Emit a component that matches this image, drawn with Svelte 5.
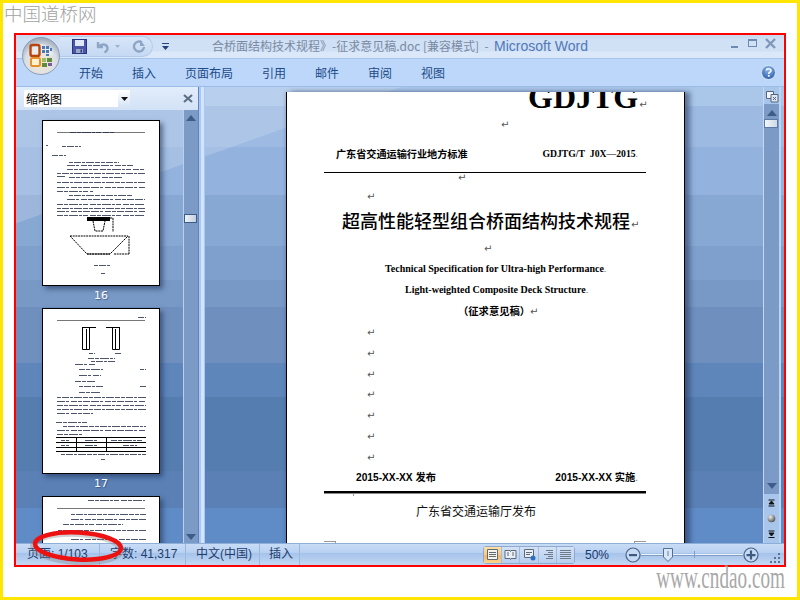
<script>
  const pat = ['6 1 4 1 9 1 3 1 5 2', '4 1 7 1 3 1 8 1 5 1', '8 1 3 2 6 1 4 1 7 1'];
  // [x1, x2, y] in thumbnail coordinates
  const t1 = [[27,71,11],[19,38,25],[3,5,24],[9,23,34],[26,76,41],[24,90,44],[24,102,48],[14,102,52],[14,22,55],[26,79,56],[14,102,61],[14,102,66],[14,50,70],[26,90,74],[24,102,78],[14,102,83],[14,102,87],[14,102,90],[14,102,94],[51,67,144],[58,62,152]];
  const t2 = [[95,103,8],[46,52,44],[72,78,44],[45,72,49],[48,72,52],[32,52,55],[36,60,60],[97,103,60],[36,58,66],[32,52,72],[36,60,77],[97,103,77],[36,58,83],[14,103,88],[14,103,92],[14,103,96],[14,103,100],[14,50,104],[13,45,113],[20,103,117],[14,103,121],[14,40,125],[18,26,131],[42,54,131],[68,100,131],[18,26,136],[42,54,136],[80,94,136],[18,103,145],[58,62,150]];
  const t3 = [[45,102,3],[28,103,17],[28,103,22],[20,80,27],[15,103,33],[28,103,42],[30,80,46]];
  const rets = [0,1,2,3,4,5,6];
  const views = [0,1,2,3,4];
</script>

{#snippet lines(list)}
  {#each list as l, i}
    <line x1={l[0]} x2={l[1]} y1={l[2] + 0.5} y2={l[2] + 0.5} stroke="#1f2a44" stroke-opacity=".8" stroke-width="1" stroke-dasharray={pat[i % 3]} />
  {/each}
{/snippet}

<div class="screen">
  <div class="wm-top">中国道桥网</div>

  <div class="window">
    <div class="title">
      <div class="qat">
        <svg class="save" width="15" height="15" viewBox="0 0 15 15"><rect x=".5" y=".5" width="14" height="14" fill="#4a55a8" stroke="#2b3480"/><rect x="3" y="1" width="9" height="6" fill="#dfe6f5"/><rect x="4" y="10" width="7" height="4" fill="#9aa6c8"/><rect x="8.5" y="10.5" width="1.5" height="3" fill="#2b3480"/></svg>
        <svg class="undo" width="15" height="14" viewBox="0 0 15 14"><path d="M3 2v5h5M3.5 7C6 3.5 12 3.500 12.500 8c.2 2-1 3.500-3 4.500" fill="none" stroke="#8ea6c6" stroke-width="2.400"/></svg>
        <svg class="mini" width="5" height="3" viewBox="0 0 5 3"><path d="M0 0h5L2.500 3z" fill="#9db2cf"/></svg>
        <svg class="redo" width="14" height="14" viewBox="0 0 14 14"><path d="M10 2.500A5 5 0 1 0 12 7" fill="none" stroke="#8ea6c6" stroke-width="2.400"/><path d="M8 0v6h5z" fill="#8ea6c6"/></svg>
      </div>
      <svg class="custom" width="7" height="8" viewBox="0 0 7 8"><rect y="0" width="7" height="1" fill="#23427c"/><path d="M0 3h7L3.500 7z" fill="#23427c"/></svg>
      <div class="doc-title">合桥面结构技术规程》-征求意见稿.doc [兼容模式] &nbsp;-&nbsp; <span>Microsoft Word</span></div>
      <div class="winbtns">
        <svg width="50" height="14" viewBox="0 0 50 14"><rect x="1" y="9" width="7" height="2" fill="#6f8ab0"/><rect x="18.500" y="2.500" width="8" height="7" fill="none" stroke="#6f8ab0"/><rect x="18" y="2" width="9" height="2" fill="#6f8ab0"/><path d="M36 2l9 9M45 2l-9 9" stroke="#7f97b8" stroke-width="2.400"/></svg>
      </div>
    </div>

    <div class="tabs">
      <span class="t1">开始</span><span class="t2">插入</span><span class="t3">页面布局</span><span class="t4">引用</span><span class="t5">邮件</span><span class="t6">审阅</span><span class="t7">视图</span>
      <svg class="help" width="15" height="15" viewBox="0 0 15 15"><defs><radialGradient id="hb" cx=".5" cy=".3" r=".8"><stop offset="0" stop-color="#8fb8ec"/><stop offset="1" stop-color="#1d4f9f"/></radialGradient></defs><circle cx="7.500" cy="7.500" r="7" fill="url(#hb)" stroke="#dce9fa"/><path d="M5.200 5.500c.3-2.200 4.800-2.200 4.800.2 0 1.600-2.300 1.500-2.300 3.300" fill="none" stroke="#fff" stroke-width="1.500"/><rect x="6.900" y="10" width="1.700" height="1.700" fill="#fff"/></svg>
    </div>

    <div class="main">
      <aside class="thumbs">
        <div class="thumb-head">
          <div class="combo">
            <span>缩略图</span>
            <div class="combo-btn"><svg width="7" height="4" viewBox="0 0 7 4"><path d="M0 0h7L3.500 4z" fill="#111"/></svg></div>
          </div>
          <svg class="x" width="10" height="9" viewBox="0 0 10 9"><path d="M1 1l8 7M9 1l-8 7" stroke="#5e6f86" stroke-width="2.200"/></svg>
        </div>
        <div class="thumb-body">
          <div class="list">
            <div class="thumb">
              <svg width="116" height="164" viewBox="0 0 116 164">
                <rect x="14" y="11" width="88" height="1" fill="#777"/>
                <g>{@render lines(t1)}</g>
                <rect x="44" y="96" width="23" height="4" fill="#000"/>
                <path d="M50 100l2 10h8l2-10M70 97v14M67 97h3M27 115h58M27 115l17 18h23l18-18M44 133h23M71 133h15M86 115v18" fill="none" stroke="#000" stroke-dasharray="2 .7"/>
              </svg>
            </div>
            <div class="num">16</div>
            <div class="thumb">
              <svg width="116" height="164" viewBox="0 0 116 164">
                <rect x="14" y="11" width="88" height="1" fill="#777"/>
                <g>{@render lines(t2)}</g>
                <path d="M39.500 18.500v22h7v-22M43.500 20v20M39 18.500h14M76.500 18.500v22h-7v-22M72.500 20v20M63 18.500h14" fill="none" stroke="#000"/>
                <path d="M13 128.500h90M13 133.500h90M13 138.500h90M13 142.500h90M33.500 128v15M63.500 128v15" stroke="#000"/>
              </svg>
            </div>
            <div class="num">17</div>
            <div class="thumb last">
              <svg width="116" height="164" viewBox="0 0 116 164">
                <rect x="14" y="11" width="88" height="1" fill="#777"/>
                <g>{@render lines(t3)}</g>
              </svg>
            </div>
          </div>
          <div class="lscroll">
            <svg width="10" height="6" viewBox="0 0 10 6"><path d="M0 6h10L5 0z" fill="#3f5b88"/></svg>
            <div class="lthumb"></div>
            <svg class="down" width="10" height="6" viewBox="0 0 10 6"><path d="M0 0h10L5 6z" fill="#3f5b88"/></svg>
          </div>
        </div>
      </aside>
      <div class="splitter"></div>

      <div class="docarea">
        <div class="page">
          <div class="gd">GDJTG<span class="ret">↵</span></div>
          <div class="row rb"><span class="ret">↵</span></div>
          <div class="row rc"><b class="cjk">广东省交通运输行业地方标准</b><b class="code">GDJTG/T&nbsp; J0X—2015<i>.</i></b></div>
          <div class="rule"></div>
          <div class="rd"><span class="ret">↵</span></div>
          <div class="row re"><span class="ret">↵</span></div>
          <div class="ttl">超高性能轻型组合桥面结构技术规程<span class="ret">↵</span></div>
          <div class="row rg"><span class="ret">↵</span></div>
          <div class="row en rh">Technical Specification for Ultra-high Performance<i>.</i></div>
          <div class="row en ri">Light-weighted Composite Deck Structure<i>.</i></div>
          <div class="row rj"><b>（征求意见稿）</b><span class="ret">↵</span></div>
          <div class="rets">
            {#each rets as r}<div class="retline"><span class="ret">↵</span></div>{/each}
          </div>
          <div class="row dates"><b>2015-XX-XX 发布</b><b>2015-XX-XX 实施<i>.</i></b></div>
          <div class="thick"></div>
          <div class="mark"></div>
          <div class="row pub">广东省交通运输厅发布</div>
          <div class="crops"><span class="c1"></span><span class="c2"></span></div>
        </div>
      </div>

      <div class="rscroll">
        <svg class="ruler" width="14" height="13" viewBox="0 0 14 13"><path d="M1.500 1.500h7v7h-7z" fill="#f2f5fa" stroke="#55657c"/><path d="M6 4.500h7v7.500H6z" fill="#dfe7f2" stroke="#55657c"/><path d="M8 7l3 3M11 7l-3 3" stroke="#55657c"/></svg>
        <div class="rtrack">
          <svg class="up" width="10" height="6" viewBox="0 0 10 6"><path d="M0 6h10L5 0z" fill="#3f5b88"/></svg>
          <div class="rthumb"></div>
          <svg class="dn" width="10" height="6" viewBox="0 0 10 6"><path d="M0 0h10L5 6z" fill="#3f5b88"/></svg>
        </div>
        <div class="nav">
          <svg width="9" height="8" viewBox="0 0 9 8"><path d="M1.500 1h6M4.500 2L7 5H2zM1.500 7h6" fill="#111" stroke="#111"/></svg>
          <svg width="9" height="9" viewBox="0 0 9 9"><defs><radialGradient id="ng" cx=".35" cy=".3" r=".8"><stop offset="0" stop-color="#eee"/><stop offset="1" stop-color="#444"/></radialGradient></defs><circle cx="4.500" cy="4.500" r="3.800" fill="url(#ng)"/></svg>
          <svg width="9" height="8" viewBox="0 0 9 8"><path d="M1.500 1h6M2 3h5L4.500 6zM1.500 7.500h6" fill="#111" stroke="#111"/></svg>
        </div>
      </div>
      <div class="rborder"></div>
    </div>

    <div class="status">
      <span class="s s1">页面: 1/103</span>
      <span class="s s2">字数: 41,317</span>
      <span class="s s3">中文(中国)</span>
      <span class="s s4">插入</span>
      <div class="views">
        {#each views as v}
          <div class="view" class:on={v === 0}>
            <svg width="13" height="13" viewBox="0 0 13 13">
              {#if v === 0}
                <path d="M1.500 1.500h10v10h-10z" fill="#f6f3ea" stroke="#5f6a78"/><path d="M3 4.500h7M3 6.500h7M3 8.500h7" stroke="#5f6a78"/>
              {:else if v === 1}
                <path d="M1 2.500h5l.5 1 .5-1h5v8H7l-.5 1-.5-1H1z" fill="#e9eef6" stroke="#5f6a78"/><path d="M3 5h2M3 7h2M8 5h2M8 7h2" stroke="#5f6a78"/>
              {:else if v === 2}
                <path d="M1.500 1.500h9v8h-9z" fill="#e9eef6" stroke="#5f6a78"/><path d="M3 4.500h6M3 6.500h4" stroke="#5f6a78"/><circle cx="10" cy="10" r="2.500" fill="#2f6fc0"/>
              {:else if v === 3}
                <path d="M5 2.500h7M7 4.500h5M3 6.500h9M7 8.500h5M5 10.500h7" stroke="#6f7a88"/>
              {:else}
                <path d="M1 2.500h11M1 4.500h11M1 6.500h11M1 8.500h11M1 10.500h11" stroke="#6f7a88"/>
              {/if}
            </svg>
          </div>
        {/each}
      </div>
      <span class="zoomval">50%</span>
      <div class="zoomer">
        <svg width="16" height="16" viewBox="0 0 16 16"><circle cx="8" cy="8" r="7" fill="#c6daf4" stroke="#4a6387" stroke-width="1.200"/><rect x="4" y="7" width="8" height="2.200" fill="#3f5a80"/></svg>
        <div class="track">
          <span class="tick"></span>
          <svg class="knob" width="10" height="14" viewBox="0 0 10 14"><path d="M.5.500h9v8.500L5 13.500.5 9z" fill="#d9e7f8" stroke="#55708f"/><rect x="4.500" y="3" width="1" height="5" fill="#6a86a8"/></svg>
        </div>
        <svg width="16" height="16" viewBox="0 0 16 16"><circle cx="8" cy="8" r="7" fill="#c6daf4" stroke="#4a6387" stroke-width="1.200"/><path d="M3.500 7h9v2.200h-9zM6.900 3.500h2.200v9H6.900z" fill="#3f5a80"/></svg>
      </div>
      <svg class="grip" width="11" height="11" viewBox="0 0 11 11"><path d="M8 0h2v2H8zM4 4h2v2H4zM8 4h2v2H8zM0 8h2v2H0zM4 8h2v2H4zM8 8h2v2H8z" fill="#5a7394"/></svg>
    </div>

    <div class="orb">
      <svg width="38" height="38" viewBox="0 0 38 38">
        <defs>
          <radialGradient id="og" cx=".5" cy=".65" r=".7"><stop offset="0" stop-color="#fbe9cf"/><stop offset=".6" stop-color="#d9dfe6"/><stop offset="1" stop-color="#8c97a9"/></radialGradient>
        </defs>
        <circle cx="19" cy="19" r="18.500" fill="url(#og)" stroke="#8d9db6"/>
        <path d="M7 19a12 12 0 0 1 24 0c-6-4-18-4-24 0z" fill="#fff" opacity=".35"/>
        <rect x="8.500" y="8" width="9" height="11" rx="2" fill="none" stroke="#b8440f" stroke-width="2.400"/>
        <g fill="#4a79b8"><rect x="20" y="9" width="3" height="3"/><rect x="24" y="9" width="3" height="3"/><rect x="28" y="11" width="2" height="3"/><rect x="20" y="13" width="3" height="3"/><rect x="24" y="13" width="3" height="3"/><rect x="24" y="17" width="3" height="2"/></g>
        <rect x="9" y="21" width="9" height="8" rx="1.500" fill="#fff1d2" stroke="#e6912a" stroke-width="2"/>
        <rect x="20" y="21" width="4" height="4" fill="#9dbb62"/><rect x="25" y="21" width="5" height="4" fill="#5f8d3b"/><rect x="20" y="26" width="5" height="4" fill="#5f8d3b"/><rect x="26" y="26" width="4" height="3" fill="#7a5ba0"/>
      </svg>
    </div>
  </div>

  <div class="wm-bottom">www.cndao.com</div>

  <svg class="oval" width="110" height="50" viewBox="0 0 110 50">
    <ellipse cx="55" cy="27" rx="44" ry="14" fill="none" stroke="#7a7a7a" stroke-width="6" opacity=".35" transform="rotate(3 55 27)"/>
    <ellipse cx="56" cy="25" rx="43" ry="13.500" fill="none" stroke="#ee1111" stroke-width="4.500" transform="rotate(3 56 25)"/>
  </svg>
</div>

<style>
  :global(body) { margin: 0; }
  .screen {
    position: relative; box-sizing: border-box; width: 800px; height: 600px;
    border: 3px solid #ffe600; background: #fff; overflow: hidden;
    font-family: "Liberation Sans", "Noto Sans CJK SC", sans-serif;
  }
  .wm-top {
    height: 30px; line-height: 20px; padding-left: 1px; font-size: 18.500px; font-weight: 300;
    color: #a2a2a2; font-family: "Noto Sans CJK SC", sans-serif;
  }
  .wm-bottom {
    height: 26px; margin-top: -3px; width: 782px; text-align: right; font-family: "Liberation Serif", serif; font-size: 32px;
    line-height: 26px; color: #a8a8a8; transform: scaleX(.6); transform-origin: right; white-space: nowrap;
  }
  .window {
    position: relative; margin-left: 11px; box-sizing: border-box; width: 772px; height: 534px;
    border: 2px solid #f00; background: #bcd6f7; display: flex; flex-direction: column; overflow: hidden;
  }
  .title {
    height: 24px; flex: none; display: flex; align-items: flex-start; box-sizing: border-box;
    background: linear-gradient(#cbdcf1 0, #cbdcf1 3px, #d0e0f5 4px, #d0e0f5 16px, #dbe8fa 17px, #dbe8fa 23px, #a6c3ec 23px);
  }
  .qat {
    margin: 1px 0 0 44px; width: 93px; height: 21px; box-sizing: border-box; flex: none;
    border: 1px solid #b2cbeb; border-left: 0; border-radius: 0 11px 11px 0;
    background: linear-gradient(#d8e6f8, #c5d9f3); display: flex; align-items: center;
  }
  .save { margin-left: 12px; }
  .undo { margin-left: 8px; }
  .mini { margin-left: 5px; }
  .redo { margin-left: 12px; }
  .custom { margin: 8px 0 0 9px; flex: none; }
  .doc-title {
    margin: 2px 0 0 43px; font-size: 12px; line-height: 17px; color: #7a8aa3; white-space: nowrap;
    font-family: "Noto Sans CJK SC", sans-serif;
  }
  .doc-title span { color: #5078b8; font-family: "Liberation Sans", sans-serif; font-size: 14px; }
  .winbtns { margin: 2px 0 0 auto; padding-right: 4px; height: 14px; }
  .tabs {
    height: 28px; flex: none; display: flex; align-items: center; background: #bcd7f9; box-sizing: border-box;
    border-bottom: 1px solid #9cbce8; color: #1d4a88; font-size: 12px; font-family: "Noto Sans CJK SC", sans-serif;
  }
  .tabs span { flex: none; line-height: 20px; }
  .t1 { margin-left: 63px; }
  .t2, .t3, .t4, .t5, .t6, .t7 { margin-left: 29px; }
  .help { margin-left: auto; margin-right: 8px; }
  .main {
    flex: 1; min-height: 0; display: flex;
    background:
      linear-gradient(160.500deg, rgba(255,255,255,.17) 128px, transparent 129px),
      linear-gradient(#aac6e9 0 19px, #9cbae2 19px 60px, #93b3de 60px 108px, #88a8d4 108px 159px, #7fa0cc 159px 193px, #7899c5 193px 220px, #6f90bf 220px 276px, #5f86bb 276px 310px, #567db0 310px 384px, #5a80b6 384px 421px, #5f8bc6 421px);
  }
  .thumbs { width: 182px; flex: none; display: flex; flex-direction: column; }
  .thumb-head { height: 23px; flex: none; display: flex; align-items: center; background: linear-gradient(#e2edfb, #d3e2f6); }
  .combo { margin-left: 8px; width: 106px; height: 17px; background: #fff; display: flex; align-items: center; justify-content: space-between; }
  .combo span { font-size: 12px; color: #000; font-family: "Noto Sans CJK SC", sans-serif; margin-left: 2px; }
  .combo-btn { width: 12px; height: 17px; background: linear-gradient(#fff, #d5e4f7); display: flex; align-items: center; justify-content: center; }
  .x { margin-left: 53px; }
  .thumb-body { flex: 1; min-height: 0; display: flex; }
  .list { width: 167px; flex: none; overflow: hidden; padding: 10px 0 0 26px; box-sizing: border-box; }
  .thumb { width: 116px; height: 164px; background: #fff; border: 1px solid #000; box-shadow: 3px 3px 5px rgba(30,50,90,.6); }
  .thumb svg { display: block; }
  .num { width: 118px; height: 22px; text-align: center; line-height: 20px; font-size: 11px; color: #fff; font-family: "DejaVu Sans", sans-serif; text-shadow: 1px 1px 1px rgba(30,50,90,.5); }
  .lscroll { width: 15px; flex: none; position: relative; background: #7b9ac5; border-left: 1px solid #b8cfee; display: flex; flex-direction: column; align-items: center; padding-top: 5px; box-sizing: border-box; }
  .lthumb { position: absolute; top: 104px; left: 0; width: 13px; height: 9px; border: 1px solid #3d5a88; box-sizing: border-box; background: linear-gradient(90deg, #eef4fb, #c4cfdd); }
  .down { margin-top: auto; margin-bottom: 3px; }
  .splitter { width: 7px; flex: none; background: linear-gradient(90deg, #5f85bd 0 1px, #a9c8f5 1px 3px, #d3e4fc 3px 6px, #a9c8f5 6px); }
  .docarea { width: 558px; flex: none; overflow: hidden; padding: 5px 0 0 81px; box-sizing: border-box; }
  .page {
    width: 399px; height: 470px; box-sizing: border-box; background: #fff; border: 1px solid #000; border-top: 0;
    box-shadow: 5px 0 5px rgba(30,50,85,.55), -1px 0 3px rgba(30,50,85,.2); padding-left: 37px; overflow: hidden;
    font-family: "Liberation Serif", "Noto Sans CJK SC", serif; color: #000;
  }
  .page > * { width: 322px; }
  .ret { font: 10px/1 "DejaVu Sans", sans-serif; color: #555; }
  .page i { font-style: normal; color: #777; font-weight: 400; }
  .gd { height: 16px; line-height: 16px; margin-top: -3px; padding-left: 204px; font-weight: 700; font-size: 32px; white-space: nowrap; box-sizing: border-box; }
  .gd .ret { margin-left: 1px; }
  .row { height: 16px; line-height: 16px; font-size: 10px; box-sizing: border-box; white-space: nowrap; }
  .rb { margin-top: 12px; padding-left: 177px; }
  .rc { margin-top: 13px; display: flex; justify-content: space-between; padding: 0 8px 0 12px; }
  .rc .cjk { font-family: "Noto Sans CJK SC", sans-serif; font-size: 10.150px; font-weight: 700; }
  .rc .code { font-size: 9.700px; }
  .rule { height: 1px; background: #000; margin-top: 10px; }
  .rd { height: 6px; line-height: 6px; padding-left: 134px; box-sizing: border-box; }
  .re { margin-top: 10px; padding-left: 43px; }
  .ttl { height: 24px; margin-top: 3px; padding-left: 18px; box-sizing: border-box; font: 500 18px/24px "Noto Sans CJK SC", sans-serif; white-space: nowrap; }
  .ttl .ret { margin-left: 1px; }
  .rg { margin-top: 9px; padding-left: 160px; }
  .en { font-weight: 700; font-size: 10px; }
  .rh { margin-top: 4px; padding-left: 61px; }
  .ri { margin-top: 5px; padding-left: 81px; }
  .rj { margin-top: 5px; padding-left: 134px; font-family: "Noto Sans CJK SC", sans-serif; font-size: 10.300px; }
  .rj .ret { margin-left: 0; }
  .rets { margin-top: 2px; padding-left: 43px; box-sizing: border-box; height: 145px; }
  .retline { height: 20.750px; line-height: 20.750px; }
  .dates { margin-top: 4px; display: flex; justify-content: space-between; padding: 0 8px 0 32px; font-family: "Liberation Sans", "Noto Sans CJK SC", sans-serif; font-size: 10.200px; }
  .thick { height: 2px; background: #000; border-bottom: 1px solid #888; margin-top: 5px; }
  .mark { width: 1px !important; height: 2px; margin-left: 29px; background: #999; }
  .pub { margin-top: 7px; padding-left: 92px; font: 12px/16px "Noto Sans CJK SC", sans-serif; color: #111; }
  .crops { height: 3px; margin-top: 22px; display: flex; justify-content: space-between; }
  .crops span { width: 12px; height: 3px; box-sizing: border-box; border-top: 1px solid #999; }
  .c1 { border-right: 1px solid #999; }
  .c2 { border-left: 1px solid #999; }
  .rscroll { width: 15px; flex: none; display: flex; flex-direction: column; align-items: center; background: #a8c5ec; border-left: 1px solid #c4d8f4; box-sizing: content-box; }
  .ruler { margin-top: 3px; flex: none; }
  .rtrack { position: relative; flex: 1; width: 15px; margin-top: 1px; background: #7b9ac5; display: flex; flex-direction: column; align-items: center; padding-top: 6px; box-sizing: border-box; }
  .rthumb { position: absolute; top: 15px; left: 0; width: 14px; height: 9px; box-sizing: border-box; border: 1px solid #5c7aa6; background: linear-gradient(90deg, #f1f6fc, #cfd9e6); }
  .dn { margin-top: auto; margin-bottom: 5px; }
  .nav { height: 49px; flex: none; display: flex; flex-direction: column; gap: 7px; align-items: center; padding-top: 5px; box-sizing: border-box; }
  .rborder { width: 2px; flex: none; background: #bcd4f4; }
  .status {
    height: 22px; flex: none; display: flex; align-items: center; box-sizing: border-box; position: relative;
    border-top: 1px solid #8daed9; font-size: 12px; color: #1f3e6e;
    background: linear-gradient(#c8dcf6 0, #b9d1f1 40%, #a6c3ea 45%, #c3d8f4 100%);
  }
  .s { height: 21px; line-height: 21px; box-sizing: border-box; border-right: 1px solid #9ab7dd; white-space: nowrap; flex: none; }
  .s1 { width: 84px; padding-left: 11px; }
  .s2 { width: 86px; padding-left: 10px; }
  .s3 { width: 74px; padding-left: 10px; }
  .s4 { width: 40px; padding-left: 9px; }
  .views { margin-left: 183px; width: 92px; height: 18px; box-sizing: border-box; display: flex; border: 1px solid #8fa9cd; border-radius: 3px; flex: none; }
  .view { flex: 1; display: flex; align-items: center; justify-content: center; border-right: 1px solid #a2bbdc; background: linear-gradient(#d2e2f6, #b7cfee); }
  .view:last-child { border-right: 0; }
  .view.on { background: linear-gradient(#fde0a6 0, #f9c879 50%, #f6b55a 55%, #fbd694 100%); }
  .zoomval { margin-left: 10px; width: 32px; flex: none; color: #17376d; font-size: 12px; }
  .zoomer { margin-left: 8px; display: flex; align-items: center; flex: none; }
  .track { position: relative; width: 102px; height: 1px; background: #eef4fc; box-shadow: 0 1px 0 #7f9bc2; }
  .tick { position: absolute; left: 53px; top: -3px; width: 1px; height: 7px; background: #7f9bc2; }
  .knob { position: absolute; left: 22px; top: -6px; }
  .grip { margin-left: auto; margin-right: 3px; margin-top: 8px; }
  .orb { position: absolute; left: 6px; top: 2px; width: 38px; height: 38px; }
  .oval { position: absolute; left: 19px; top: 518px; overflow: visible; }
</style>
